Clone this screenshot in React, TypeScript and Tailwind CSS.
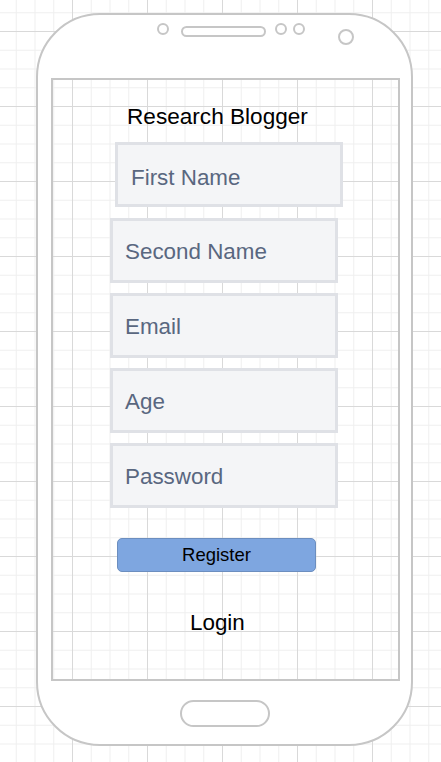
import React from 'react';

const grid =
  "bg-white bg-fixed bg-[linear-gradient(to_right,#d9d9d9_1px,transparent_1px),linear-gradient(to_bottom,#d9d9d9_1px,transparent_1px),linear-gradient(to_right,#efefef_1px,transparent_1px),linear-gradient(to_bottom,#efefef_1px,transparent_1px)] bg-[length:75px_75px,75px_75px,18.75px_18.75px,18.75px_18.75px] bg-[position:72px_31px,72px_31px,15.75px_12.25px,15.75px_12.25px]";

export default function App() {
  const fields = ["Second Name", "Email", "Age", "Password"];

  return (
    <main className={`w-[441px] h-[762px] overflow-hidden pt-[13px] pl-[36px] font-['Liberation_Sans',Arial,sans-serif] ${grid}`}>
      {/* phone body */}
      <div className="w-[377px] h-[733px] bg-white border-2 border-[#c6c6c6] rounded-[64px]">
        {/* sensors + speaker */}
        <div className="flex items-start">
          <div className="ml-[119px] mt-[8px] w-[12px] h-[12px] rounded-full border-2 border-[#c6c6c6]" />
          <div className="ml-[12px] mt-[11px] w-[85px] h-[11px] rounded-full border-2 border-[#c6c6c6]" />
          <div className="ml-[9px] mt-[8px] w-[12px] h-[12px] rounded-full border-2 border-[#c6c6c6]" />
          <div className="ml-[6px] mt-[8px] w-[12px] h-[12px] rounded-full border-2 border-[#c6c6c6]" />
          <div className="ml-[33px] mt-[14px] w-[16px] h-[16px] rounded-full border-2 border-[#c6c6c6]" />
        </div>

        {/* screen */}
        <div className={`ml-[13px] mt-[33px] w-[349px] h-[603px] border-2 border-[#c6c6c6] flex flex-col items-start ${grid}`}>
          <h1 className="ml-[74px] mt-[24px] text-[22.6px] leading-[26px] text-black">Research Blogger</h1>

          <div className="ml-[62px] mt-[12px] w-[228px] h-[65px] border-[3px] border-[#dfe1e6] bg-[#f4f5f7] flex items-center pl-[13px] pt-[6px] text-[22.4px] text-[#596780]">
            First Name
          </div>

          <div className="mt-[11px] flex flex-col gap-[10px]">
            {fields.map((f) => (
              <div
                key={f}
                className="ml-[57px] w-[228px] h-[65px] border-[3px] border-[#dfe1e6] bg-[#f4f5f7] flex items-center pl-[12px] pt-[3px] text-[22.4px] text-[#596780]"
              >
                {f}
              </div>
            ))}
          </div>

          <button className="ml-[64px] mt-[30px] w-[199px] h-[34px] rounded-[5px] border border-[#6c8ebf] bg-[#7ea6e0] text-[18.5px] leading-none text-black">
            Register
          </button>

          <p className="ml-[137px] mt-[38px] text-[22.4px] leading-[26px] text-black">Login</p>
        </div>

        {/* home button */}
        <div className="ml-[142px] mt-[19px] w-[90px] h-[27px] rounded-full border-2 border-[#c6c6c6]" />
      </div>
    </main>
  );
}
